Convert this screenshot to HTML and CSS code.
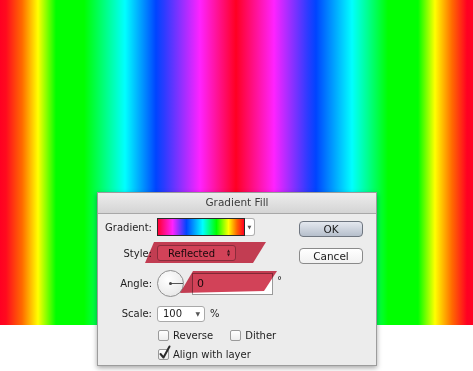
FILE: index.html
```html
<!DOCTYPE html>
<html lang="en">
<head>
    <meta charset="UTF-8">
    <title>Gradient Fill</title>
    <link rel="stylesheet" href="styles.css">
</head>
<body>

<div class="canvas"></div>

<div class="dialog">
    <div class="title">Gradient Fill</div>
    <div class="body">
        <div class="form">
            <div class="row row-gradient">
                <span class="label">Gradient:</span>
                <span class="swatch"></span>
                <span class="drop">&#9660;</span>
            </div>
            <div class="row row-style">
                <span class="label">Style:</span>
                <span class="select">Reflected <span class="updown">&#9650;<br>&#9660;</span></span>
            </div>
            <div class="row row-angle">
                <span class="label">Angle:</span>
                <span class="dial"><span class="hand"></span><span class="pin"></span></span>
                <span class="input">0</span>
                <span class="unit">&deg;</span>
            </div>
            <div class="row row-scale">
                <span class="label">Scale:</span>
                <span class="select small">100 <span class="arrow">&#9660;</span></span>
                <span class="pct">%</span>
            </div>
            <div class="row checks">
                <span class="check"><span class="box"></span>Reverse</span>
                <span class="check"><span class="box"></span>Dither</span>
            </div>
            <div class="row checks">
                <span class="check">
                    <span class="box on">
                        <svg width="14" height="15" viewBox="0 0 14 15"><path d="M2.5 9 L5.5 12.5 L11.5 1.5" fill="none" stroke="#2b2b2b" stroke-width="2" stroke-linecap="round" stroke-linejoin="round"/></svg>
                    </span>Align with layer
                </span>
            </div>
        </div>
        <div class="buttons">
            <span class="btn default">OK</span>
            <span class="btn">Cancel</span>
        </div>
    </div>

    <!-- red marker strokes drawn over the fields -->
    <div class="mark mark-style"></div>
    <div class="mark mark-angle"></div>
</div>

</body>
</html>
```

FILE: styles.css
```css
*{
    margin: 0;
    padding: 0;
    box-sizing: border-box;
}

body{
    width: 473px;
    height: 371px;
    background: #fff;
    font-family: "DejaVu Sans", sans-serif;
    font-size: 10px;
    color: #1e1e1e;
    position: relative;
    overflow: hidden;
}

/* reflected gradient behind the dialog */
.canvas{
    width: 473px;
    height: 325px;
    background: linear-gradient(to right,
        #ff0022 0px, #ff0a1e 6px, #ff6a00 22px, #ffff00 38px,
        #00ff00 56px, #00ff00 84px, #00ffff 125px, #0044ff 156px,
        #2a3cff 164px, #ff22ff 200px, #ff0022 236px,
        #ff22ff 274px, #2a3cff 308px, #0044ff 316px, #00ffff 352px,
        #00ff00 388px, #00ff00 418px, #ffff00 435px, #ff6a00 452px,
        #ff0022 467px, #ff0022 473px);
}

.dialog{
    position: absolute;
    left: 97px;
    top: 192px;
    width: 280px;
    height: 174px;
    background: #ececec;
    border: 1px solid #9c9c9c;
    box-shadow: 0 2px 5px rgba(0,0,0,0.35);
}

.title{
    height: 21px;
    line-height: 19px;
    text-align: center;
    font-size: 10.5px;
    color: #3c3c3c;
    background: linear-gradient(#ededed, #d4d4d4);
    border-bottom: 1px solid #a8a8a8;
}

.body{
    display: flex;
    padding: 4px 13px 0 0;
}

.form{
    display: flex;
    flex-direction: column;
    gap: 9px;
}

.row{
    display: flex;
    align-items: center;
}

.label{
    width: 54px;
    text-align: right;
    margin-right: 5px;
}

.row-gradient{ height: 18px; }
.row-style{ height: 16px; }
.row-angle{ height: 27px; }
.row-scale{ height: 15px; }
.checks{ height: 10px; }

.swatch{
    width: 88px;
    height: 18px;
    border: 1px solid #2a2a2a;
    background: linear-gradient(to right,
        #ff0030 0%, #ff22ff 17%, #0044ff 33%, #00ffff 52%,
        #00ff00 68%, #ffff00 82%, #ff6000 92%, #ff0022 100%);
}

.drop{
    width: 10px;
    height: 18px;
    background: #fff;
    border: 1px solid #b0b0b0;
    border-left: 0;
    border-radius: 0 3px 3px 0;
    font-size: 5px;
    line-height: 16px;
    text-align: center;
    color: #555;
}

.select{
    display: flex;
    align-items: center;
    justify-content: space-between;
    width: 79px;
    height: 16px;
    padding: 0 5px 0 10px;
    background: #fff;
    border: 1px solid #a9a9a9;
    border-radius: 3px;
}

.updown{
    font-size: 4px;
    line-height: 4px;
    color: #444;
    text-align: center;
}

.select.small{
    width: 48px;
    height: 16px;
    padding: 0 4px 0 5px;
}

.arrow{
    font-size: 6px;
    color: #555;
}

.pct{
    margin-left: 5px;
}

.dial{
    position: relative;
    width: 27px;
    height: 27px;
    border-radius: 50%;
    border: 1px solid #8f8f8f;
    background: radial-gradient(circle at 40% 35%, #ffffff, #e2e2e2);
}

.hand{
    position: absolute;
    left: 12px;
    top: 12px;
    width: 13px;
    height: 1px;
    background: #555;
}

.pin{
    position: absolute;
    left: 11px;
    top: 11px;
    width: 3px;
    height: 3px;
    border-radius: 50%;
    background: #444;
}

.input{
    width: 81px;
    height: 22px;
    margin-left: 8px;
    padding-left: 4px;
    line-height: 20px;
    background: #fff;
    border: 1px solid #9a9a9a;
    font-size: 11px;
}

.unit{
    margin-left: 4px;
    margin-top: -6px;
}

.checks{
    padding-left: 60px;
    gap: 0;
}

.check{
    display: flex;
    align-items: center;
    margin-right: 17px;
}

.box{
    position: relative;
    width: 11px;
    height: 11px;
    margin-right: 4px;
    background: linear-gradient(#ffffff, #ededed);
    border: 1px solid #9a9a9a;
    border-radius: 2px;
}

.box svg{
    position: absolute;
    left: -1px;
    top: -5px;
}

.buttons{
    margin-left: auto;
    margin-top: 3px;
    display: flex;
    flex-direction: column;
    gap: 11px;
}

.btn{
    display: block;
    width: 64px;
    height: 16px;
    line-height: 14px;
    text-align: center;
    font-size: 10.5px;
    border: 1px solid #8a8a8a;
    border-radius: 4px;
    background: linear-gradient(#ffffff, #f1f1f1);
    color: #1a1a1a;
}

.btn.default{
    background: linear-gradient(#e4e8ef, #b6bfcc);
    border-color: #6f7680;
}

/* marker highlights */
.mark{
    position: absolute;
    background: #d24258;
    mix-blend-mode: multiply;
}

.mark-style{
    left: 47px;
    top: 49px;
    width: 121px;
    height: 21px;
    clip-path: polygon(9px 0, 121px 0, 108px 21px, 0 21px);
}

.mark-angle{
    left: 82px;
    top: 78px;
    width: 97px;
    height: 22px;
    clip-path: polygon(13px 0, 97px 0, 84px 20px, 0 22px);
}
```
